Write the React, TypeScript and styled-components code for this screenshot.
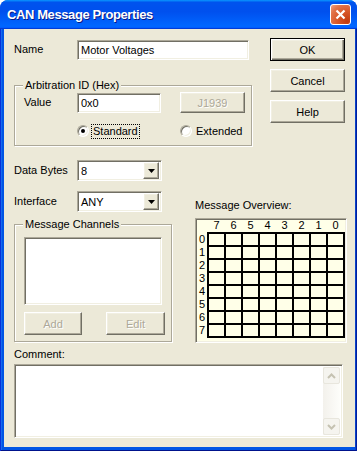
import React from "react";
import styled, { createGlobalStyle, css } from "styled-components";

const colors = {
  face: "#ECE9D8",
  shadow: "#ACA899",
  dark: "#716F64",
  light: "#F1EFE2",
  white: "#FFFFFF",
  disabled: "#ACA899",
  cream: "#FFFFE8",
};

const GlobalStyle = createGlobalStyle`
  html, body {
    margin: 0;
    padding: 0;
    background: #ffffff;
  }
  body {
    font-family: "Liberation Sans", Arial, sans-serif;
    font-size: 11px;
    color: #000;
  }
  * {
    box-sizing: border-box;
  }
`;

const sunken = css`
  border-style: solid;
  border-width: 1px;
  border-color: ${colors.shadow} ${colors.white} ${colors.white} ${colors.shadow};
  box-shadow: inset 1px 1px 0 ${colors.dark}, inset -1px -1px 0 ${colors.light};
  background: ${colors.white};
`;

const raised = css`
  border-style: solid;
  border-width: 1px;
  border-color: ${colors.white} ${colors.dark} ${colors.dark} ${colors.white};
  box-shadow: inset -1px -1px 0 ${colors.shadow}, inset 1px 1px 0 ${colors.light};
  background: ${colors.face};
`;

const Window = styled.div`
  width: 357px;
  height: 451px;
  display: flex;
  flex-direction: column;
  border-radius: 8px 8px 0 0;
  overflow: hidden;
  background: #0054e3;
`;

const TitleBar = styled.div`
  height: 29px;
  flex: none;
  display: flex;
  align-items: center;
  justify-content: space-between;
  padding: 0 6px 0 7px;
  background: linear-gradient(
    180deg,
    #0997ff,
    #0053ee 8%,
    #0050ee 40%,
    #06f 88%,
    #06f 93%,
    #005bff 95%,
    #003dd7 96%,
    #003dd7
  );
`;

const Title = styled.span`
  font-family: "Liberation Sans", Arial, sans-serif;
  font-weight: bold;
  font-size: 13px;
  letter-spacing: -0.4px;
  color: #fff;
  text-shadow: 1px 1px 0 #0a1883;
`;

const CloseButton = styled.div`
  width: 21px;
  height: 21px;
  border: 1px solid #fff;
  border-radius: 3px;
  display: flex;
  align-items: center;
  justify-content: center;
  background: radial-gradient(
    circle at 85% 85%,
    #c23a0e 0%,
    #d9582a 45%,
    #e2754b 75%,
    #f2a285 100%
  );
`;

const Frame = styled.div`
  flex: 1;
  display: flex;
  padding: 0 4px 4px;
  background: #0055e5;
  box-shadow: inset 1px 0 0 #0831d9, inset -1px 0 0 #001ea0,
    inset 0 -1px 0 #00138c, inset 2px 0 0 #166aee, inset -2px 0 0 #0842c8;
`;

const Body = styled.div`
  flex: 1;
  display: flex;
  flex-direction: column;
  padding: 9px 8px 8px 10px;
  background: ${colors.face};
`;

const TopSection = styled.div`
  display: flex;
  gap: 18px;
`;

const LeftColumn = styled.div`
  width: 238px;
  display: flex;
  flex-direction: column;
`;

const ButtonColumn = styled.div`
  display: flex;
  flex-direction: column;
  gap: 8px;
`;

const FieldRow = styled.div<{ $top?: number }>`
  display: flex;
  align-items: center;
  height: 21px;
  margin-top: ${(p) => p.$top ?? 0}px;
`;

const Label = styled.span<{ $w: number }>`
  width: ${(p) => p.$w}px;
  flex: none;
  line-height: 13px;
`;

const TextField = styled.div<{ $w: number }>`
  ${sunken};
  width: ${(p) => p.$w}px;
  height: 20px;
  padding: 0 3px;
  line-height: 18px;
  white-space: nowrap;
`;

const Button = styled.div<{ $w?: number; $h?: number; $default?: boolean; $disabled?: boolean }>`
  ${raised};
  width: ${(p) => p.$w ?? 75}px;
  height: ${(p) => p.$h ?? 23}px;
  display: flex;
  align-items: center;
  justify-content: center;
  flex: none;
  color: ${(p) => (p.$disabled ? colors.disabled : "#000")};
  text-shadow: ${(p) => (p.$disabled ? `1px 1px 0 ${colors.white}` : "none")};
  ${(p) =>
    p.$default &&
    css`
      border: 1px solid #000;
      box-shadow: inset 1px 1px 0 ${colors.white}, inset -1px -1px 0 ${colors.dark},
        inset -2px -2px 0 ${colors.shadow}, inset 2px 2px 0 ${colors.light};
    `}
`;

const Group = styled.fieldset<{ $h: number }>`
  margin: 0;
  padding: 0 6px 0 9px;
  height: ${(p) => p.$h}px;
  border: 1px solid ${colors.shadow};
  box-shadow: inset 1px 1px 0 ${colors.white}, 1px 1px 0 ${colors.white};
  min-width: 0;
`;

const Legend = styled.legend`
  margin-left: -1px;
  padding: 0 2px;
  line-height: 13px;
  background: ${colors.face};
`;

const Spacer = styled.div<{ $h: number }>`
  height: ${(p) => p.$h}px;
  flex: none;
`;

const RadioRow = styled.div`
  display: flex;
  margin-top: 11px;
  padding-left: 53px;
  height: 14px;
  align-items: center;
`;

const RadioItem = styled.div<{ $w?: number }>`
  display: flex;
  align-items: center;
  gap: 3px;
  width: ${(p) => (p.$w ? `${p.$w}px` : "auto")};
`;

const RadioCircle = styled.span<{ $checked?: boolean }>`
  width: 12px;
  height: 12px;
  border-radius: 50%;
  flex: none;
  position: relative;
  border: 1px solid;
  border-color: ${colors.shadow} ${colors.white} ${colors.white} ${colors.shadow};
  box-shadow: inset 1px 1px 0 ${colors.dark}, inset -1px -1px 0 ${colors.light};
  background: ${colors.white};
  &::after {
    content: "";
    display: ${(p) => (p.$checked ? "block" : "none")};
    position: absolute;
    left: 3px;
    top: 3px;
    width: 4px;
    height: 4px;
    border-radius: 50%;
    background: #000;
  }
`;

const RadioText = styled.span<{ $focus?: boolean }>`
  padding: 0 1px;
  line-height: 13px;
  outline: ${(p) => (p.$focus ? "1px dotted #000" : "none")};
`;

const ComboBox = styled.div`
  ${sunken};
  width: 85px;
  height: 21px;
  display: flex;
  align-items: center;
  padding: 0 2px 0 3px;
`;

const ComboText = styled.span`
  flex: 1;
`;

const DropButton = styled.div`
  ${raised};
  width: 16px;
  height: 17px;
  display: flex;
  align-items: center;
  justify-content: center;
`;

const MiddleSection = styled.div`
  display: flex;
  gap: 23px;
`;

const MidLeft = styled.div`
  width: 158px;
  display: flex;
  flex-direction: column;
  padding-top: 14px;
`;

const ListBox = styled.div`
  ${sunken};
  width: 138px;
  height: 68px;
  margin-top: 6px;
`;

const ListButtons = styled.div`
  width: 141px;
  display: flex;
  justify-content: space-between;
  margin-top: 7px;
`;

const MidRight = styled.div`
  width: 152px;
  display: flex;
  flex-direction: column;
  padding-top: 53px;
`;

const Caption = styled.div<{ $top?: number }>`
  line-height: 13px;
  margin-top: ${(p) => p.$top ?? 0}px;
`;

const OverviewBox = styled.div`
  ${sunken};
  background: ${colors.cream};
  margin-top: 6px;
  height: 125px;
  display: grid;
  grid-template-columns: 11px auto;
  grid-template-rows: 13px auto;
`;

const ColHeader = styled.div`
  display: grid;
  grid-template-columns: repeat(8, 15px);
  column-gap: 2px;
  padding-left: 2px;
  line-height: 13px;
  text-align: center;
`;

const RowHeader = styled.div`
  display: grid;
  grid-template-rows: repeat(8, 11px);
  row-gap: 2px;
  padding-top: 2px;
  line-height: 11px;
  padding-left: 3px;
`;

const Matrix = styled.div`
  display: grid;
  grid-template-columns: repeat(8, 15px);
  grid-template-rows: repeat(8, 11px);
  gap: 2px;
  padding: 2px;
  background: #000;
  width: fit-content;
  height: fit-content;
`;

const Cell = styled.div`
  background: ${colors.cream};
`;

const CommentBox = styled.div`
  ${sunken};
  margin-top: 3px;
  width: 329px;
  height: 74px;
  display: flex;
  justify-content: flex-end;
  padding: 2px;
`;

const ScrollBar = styled.div`
  width: 17px;
  display: flex;
  flex-direction: column;
  justify-content: space-between;
  background: linear-gradient(90deg, #f3f1ec, #fdfdfa);
`;

const ScrollButton = styled.div`
  width: 17px;
  height: 17px;
  border: 1px solid #e8e6dd;
  border-radius: 2px;
  background: #f5f4ef;
  display: flex;
  align-items: center;
  justify-content: center;
`;

const Chevron = ({ up }: { up?: boolean }) => (
  <svg width="9" height="6" viewBox="0 0 9 6">
    <path
      d={up ? "M1 5 L4.5 1.5 L8 5" : "M1 1 L4.5 4.5 L8 1"}
      fill="none"
      stroke="#c5c2b2"
      strokeWidth="2"
    />
  </svg>
);

const Arrow = () => (
  <svg width="7" height="4" viewBox="0 0 7 4">
    <path d="M0 0 H7 L3.5 4 Z" fill="#000" />
  </svg>
);

const Combo = ({ value }: { value: string }) => (
  <ComboBox>
    <ComboText>{value}</ComboText>
    <DropButton>
      <Arrow />
    </DropButton>
  </ComboBox>
);

const bits = ["7", "6", "5", "4", "3", "2", "1", "0"];
const rows = ["0", "1", "2", "3", "4", "5", "6", "7"];

const App = () => {
  return (
    <>
      <GlobalStyle />
      <Window>
        <TitleBar>
          <Title>CAN Message Properties</Title>
          <CloseButton>
            <svg width="11" height="11" viewBox="0 0 11 11">
              <path d="M1.5 1.5 L9.5 9.5 M9.5 1.5 L1.5 9.5" stroke="#fff" strokeWidth="2.2" />
            </svg>
          </CloseButton>
        </TitleBar>
        <Frame>
          <Body>
            <TopSection>
              <LeftColumn>
                <FieldRow $top={1}>
                  <Label $w={63}>Name</Label>
                  <TextField $w={172}>Motor Voltages</TextField>
                </FieldRow>
                <Spacer $h={19} />
                <Group $h={67}>
                  <Legend>Arbitration ID (Hex)</Legend>
                  <FieldRow>
                    <Label $w={53}>Value</Label>
                    <TextField $w={85}>0x0</TextField>
                    <Spacer $h={1} style={{ width: 19 }} />
                    <Button $w={65} $h={21} $disabled>
                      J1939
                    </Button>
                  </FieldRow>
                  <RadioRow>
                    <RadioItem $w={103}>
                      <RadioCircle $checked />
                      <RadioText $focus>Standard</RadioText>
                    </RadioItem>
                    <RadioItem>
                      <RadioCircle />
                      <RadioText>Extended</RadioText>
                    </RadioItem>
                  </RadioRow>
                </Group>
              </LeftColumn>
              <ButtonColumn>
                <Button $default>OK</Button>
                <Button>Cancel</Button>
                <Button>Help</Button>
              </ButtonColumn>
            </TopSection>
            <MiddleSection>
              <MidLeft>
                <FieldRow>
                  <Label $w={63}>Data Bytes</Label>
                  <Combo value="8" />
                </FieldRow>
                <FieldRow $top={10}>
                  <Label $w={63}>Interface</Label>
                  <Combo value="ANY" />
                </FieldRow>
                <Spacer $h={6} />
                <Group $h={124}>
                  <Legend>Message Channels</Legend>
                  <ListBox />
                  <ListButtons>
                    <Button $w={58} $disabled>
                      Add
                    </Button>
                    <Button $w={59} $disabled>
                      Edit
                    </Button>
                  </ListButtons>
                </Group>
              </MidLeft>
              <MidRight>
                <Caption>Message Overview:</Caption>
                <OverviewBox>
                  <span />
                  <ColHeader>
                    {bits.map((b) => (
                      <span key={b}>{b}</span>
                    ))}
                  </ColHeader>
                  <RowHeader>
                    {rows.map((r) => (
                      <span key={r}>{r}</span>
                    ))}
                  </RowHeader>
                  <Matrix>
                    {Array.from({ length: 64 }, (_, i) => (
                      <Cell key={i} />
                    ))}
                  </Matrix>
                </OverviewBox>
              </MidRight>
            </MiddleSection>
            <Caption $top={5}>Comment:</Caption>
            <CommentBox>
              <ScrollBar>
                <ScrollButton>
                  <Chevron up />
                </ScrollButton>
                <ScrollButton>
                  <Chevron />
                </ScrollButton>
              </ScrollBar>
            </CommentBox>
          </Body>
        </Frame>
      </Window>
    </>
  );
};

export default App;
